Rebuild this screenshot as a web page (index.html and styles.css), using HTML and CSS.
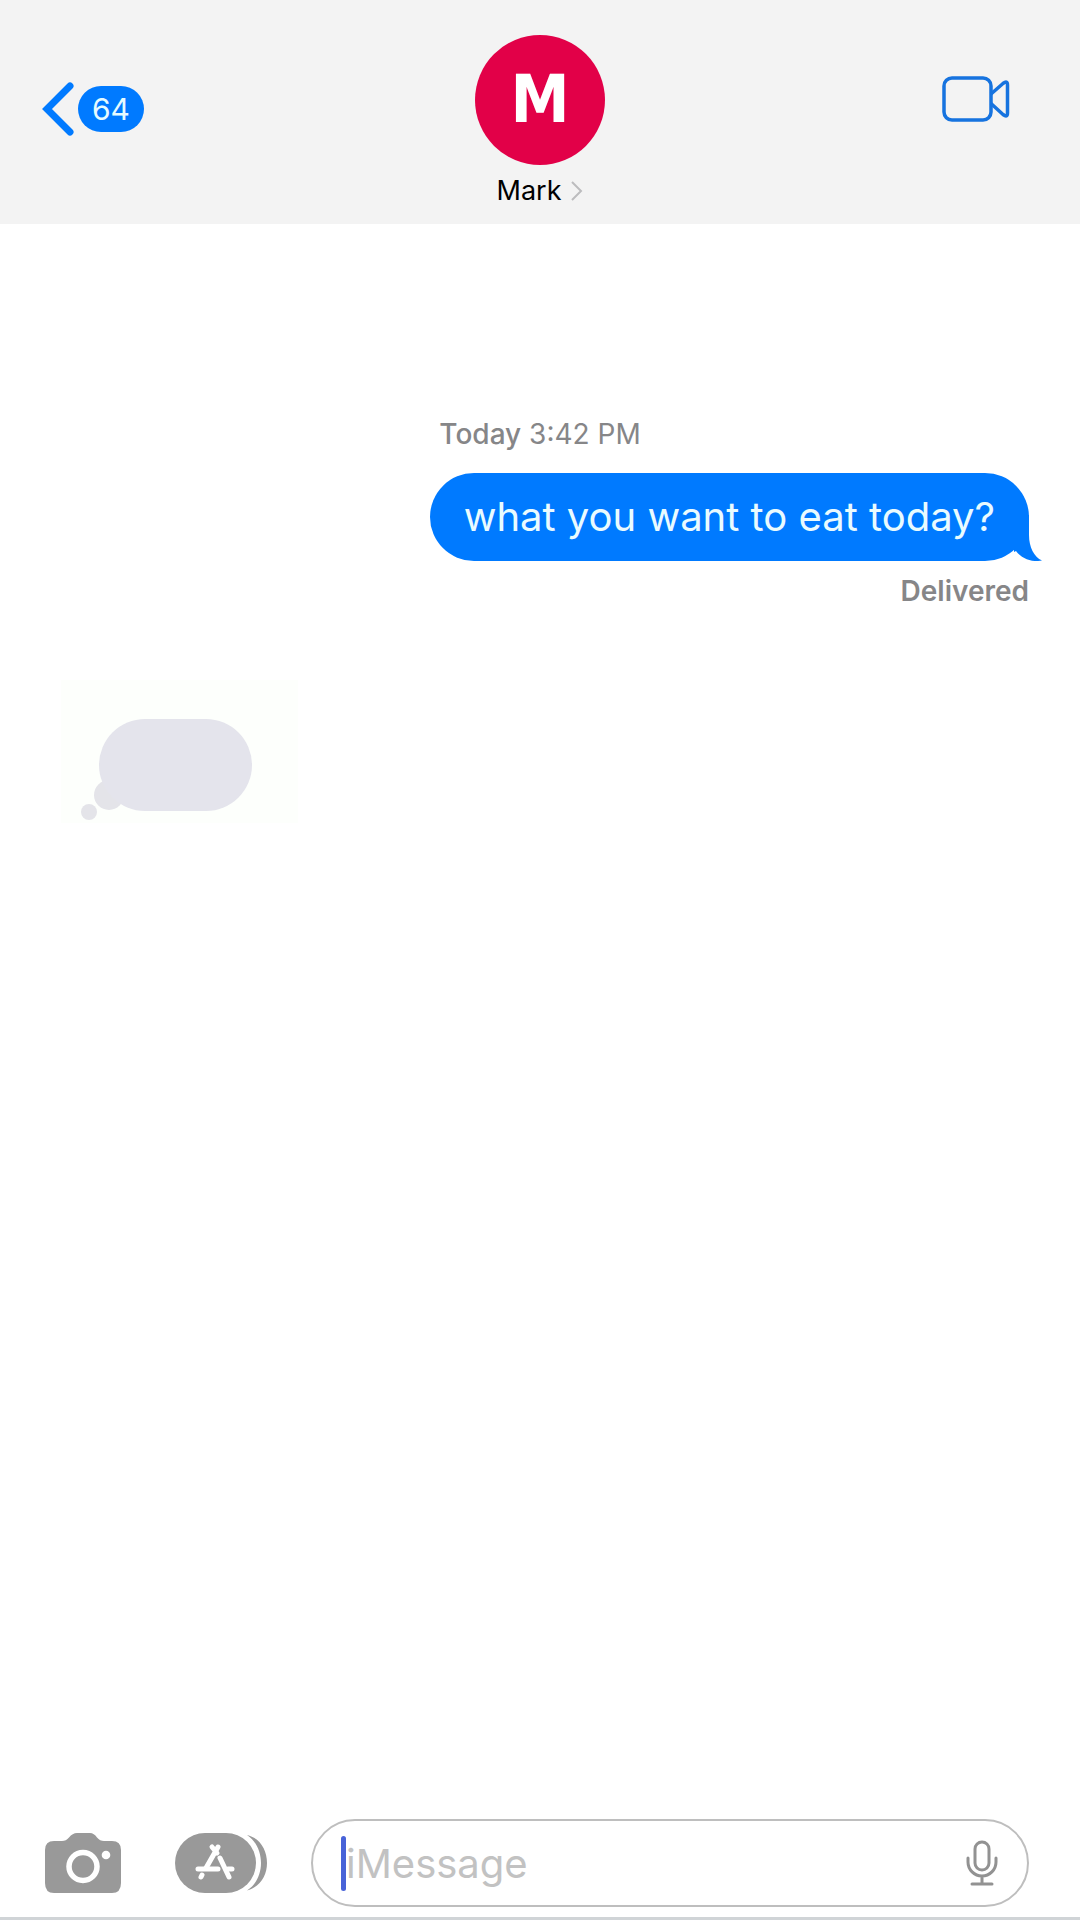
FILE: index.html
```
<!DOCTYPE html>
<html lang="en">
<head>
<meta charset="utf-8">
<meta name="viewport" content="width=device-width, initial-scale=1">
<title>Mark</title>
<link rel="stylesheet" href="styles.css">
</head>
<body>
<header class="topbar">
  <button class="back" type="button" aria-label="Back, 64 unread">
    <svg width="32" height="54" viewBox="0 0 32 54" fill="none" stroke="currentColor" stroke-width="7" stroke-linecap="round" stroke-linejoin="miter"><path d="M28 4 5 27l23 23"/></svg>
    <span class="badge">64</span>
  </button>
  <button class="contact" type="button">
    <span class="avatar">M</span>
    <span class="contact-name">Mark
      <svg width="12" height="20" viewBox="0 0 12 20" fill="none" stroke="#bcbcbe" stroke-width="2"><path d="M1 1l9 9-9 9"/></svg>
    </span>
  </button>
  <button class="video" type="button" aria-label="Video call">
    <svg width="68" height="46" viewBox="0 0 68 46" fill="none" stroke="currentColor" stroke-width="3.500" stroke-linejoin="round"><rect x="2" y="2" width="47" height="42" rx="8"/><path d="M49 18 61 7.500Q65.500 4 65.500 9V37Q65.500 42 61 38.500L49 27.500"/></svg>
  </button>
</header>

<main class="thread">
  <p class="stamp"><strong>Today</strong> 3:42 PM</p>
  <div class="bubble">what you want to eat today?
    <svg class="tail" width="28" height="46" viewBox="0 0 28 46" fill="currentColor"><path d="M0 0H15V20C15 32 20 42 28 45.500C18 47.500 8 44 2 36L0 37Z"/></svg>
  </div>
  <p class="status">Delivered</p>
  <div class="typing" role="status" aria-label="Mark is typing">
    <svg width="171" height="102" viewBox="0 0 171 102"><g fill="#e4e4e9"><circle cx="28" cy="76" r="15"/><circle cx="8" cy="93" r="8"/></g><rect x="18" y="0" width="153" height="92" rx="46" fill="#e4e4ec"/></svg>
  </div>
</main>

<footer class="composer">
  <button class="tool" type="button" aria-label="Camera">
    <svg width="76" height="60" viewBox="0 0 76 60"><path fill="#999" d="M9 8H17Q21 8 24 4.500Q27.500 0 32 0H45Q49 0 52 4.500Q55 8 59 8H67Q76 8 76 17V50Q76 60 67 60H9Q0 60 0 50V17Q0 8 9 8Z"/><circle cx="38" cy="33.500" r="14" fill="none" stroke="#fff" stroke-width="5.500"/><circle cx="61" cy="22" r="4.300" fill="#fff"/></svg>
  </button>
  <button class="tool apps" type="button" aria-label="Apps">
    <svg width="92" height="60" viewBox="0 0 92 60"><rect width="81" height="60" rx="30" fill="#999"/><path fill="#999" d="M72 2C85 5 92 17 92 30S85 54 72 57.500C81 52 86 41 86 30S81 8 72 2Z"/><g stroke="#fff" stroke-width="5" stroke-linecap="round" fill="none"><path d="M37 14l5 6M43 14 31 35"/><path d="M23 36H43M53 36H57"/><path d="M45 25l9 19M27 42l-1 2"/></g></svg>
  </button>
  <div class="field">
    <span class="caret"></span>
    <input class="input" type="text" placeholder="iMessage" aria-label="iMessage">
    <button class="mic" type="button" aria-label="Dictate">
      <svg width="32" height="46" viewBox="0 0 32 46" fill="none" stroke="#929292" stroke-width="3" stroke-linecap="round"><rect x="9" y="2" width="14" height="28" rx="7"/><path d="M2 18V22a14 14 0 0 0 28 0V18M16 36V44M6 44H26"/></svg>
    </button>
  </div>
</footer>
</body>
</html>
```
FILE: styles.css
```
* { box-sizing: border-box; }

body {
  margin: 0;
  min-height: 100vh;
  display: flex;
  flex-direction: column;
  background: #fff;
  color: #000;
  font-family: Inter, "Liberation Sans", sans-serif;
}

button {
  padding: 0;
  border: 0;
  background: none;
  font: inherit;
  color: inherit;
}

svg { display: block; flex: none; }
p { margin: 0; }

.topbar {
  display: grid;
  grid-template-columns: 1fr auto 1fr;
  align-items: start;
  padding: 35px 70px 16px 42px;
  background: #f3f3f3;
}

.back {
  display: flex;
  align-items: center;
  gap: 4px;
  justify-self: start;
  padding-top: 47px;
  color: #007aff;
}

.badge {
  padding: 0 14px;
  border-radius: 23px;
  background: #007aff;
  color: #e6fbff;
  font-size: 30px;
  line-height: 46px;
}

.contact {
  display: flex;
  flex-direction: column;
  align-items: center;
  gap: 8px;
  /* offsets the wider right padding of the bar */
  margin-left: 28px;
}

.avatar {
  width: 130px;
  border-radius: 50%;
  background: #e20048;
  color: #fff;
  font-family: "DejaVu Sans Condensed", "DejaVu Sans", sans-serif;
  font-size: 66px;
  font-weight: 700;
  line-height: 130px;
  text-align: center;
}

.contact-name {
  display: flex;
  align-items: center;
  gap: 10px;
  font-size: 27px;
  line-height: 35px;
}

.video {
  justify-self: end;
  padding-top: 41px;
  color: #1673df;
}

.thread {
  flex: 1;
  display: flex;
  flex-direction: column;
  padding: 192px 51px 40px;
}

.stamp, .status {
  color: #868688;
  font-size: 28px;
  line-height: 36px;
}

.stamp { text-align: center; }
.stamp strong { font-weight: 500; }

.bubble {
  position: relative;
  align-self: flex-end;
  max-width: 75%;
  margin: 21px 0 12px;
  padding: 19px 34px;
  border-radius: 44px;
  background: #007aff;
  color: #e9fbff;
  font-size: 40px;
  line-height: 50px;
}

.tail {
  position: absolute;
  right: -13px;
  bottom: 0;
  color: #007aff;
}

.status {
  align-self: flex-end;
  font-weight: 600;
}

.typing {
  align-self: flex-start;
  margin: 71px 0 0 10px;
  padding: 39px 46px 2px 20px;
  background: #fdfffc;
}

.composer {
  display: flex;
  align-items: center;
  padding: 0 51px 10px 45px;
  border-bottom: 3px solid #d0d4d7;
}

.apps { margin: 0 44px 0 54px; }

.field {
  flex: 1;
  min-width: 0;
  display: flex;
  align-items: center;
  height: 88px;
  padding: 0 29px 0 28px;
  border: 2px solid #bebebe;
  border-radius: 44px;
}

.caret {
  flex: none;
  width: 5px;
  height: 55px;
  border-radius: 3px;
  background: #4863d8;
}

.input {
  flex: 1;
  min-width: 0;
  padding: 0;
  border: 0;
  outline: 0;
  background: none;
  color: #000;
  font: inherit;
  font-size: 40px;
}

.input::placeholder { color: #c2c2c2; opacity: 1; }
```
